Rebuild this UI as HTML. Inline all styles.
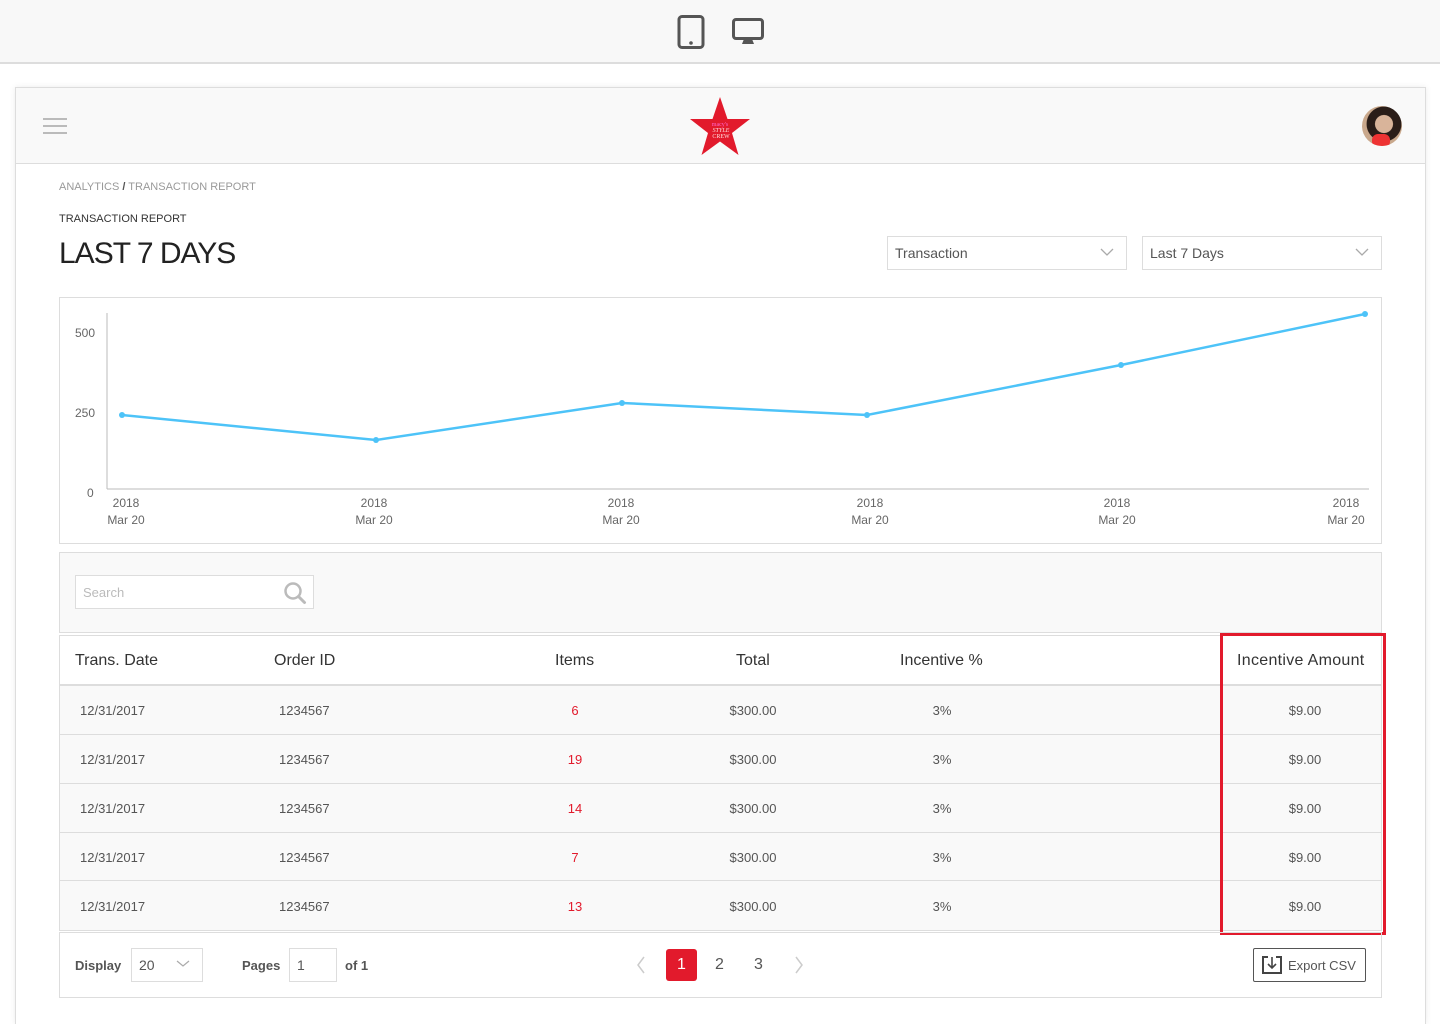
<!DOCTYPE html>
<html><head><meta charset="utf-8"><style>
*{box-sizing:border-box;margin:0;padding:0}
html{overflow:hidden;height:1024px}
body{width:1440px;height:1024px;overflow:hidden;background:#fff;font-family:"Liberation Sans",sans-serif;color:#333;position:relative}
.a{position:absolute}
.t{white-space:nowrap}
</style></head><body>
<div class="a" style="left:0;top:0;width:1440px;height:64px;background:#f8f8f8;border-bottom:2px solid #ddd"></div>
<svg class="a" style="left:677px;top:15px" width="28" height="34" viewBox="0 0 28 34"><rect x="2" y="1.5" width="24" height="31" rx="3" fill="none" stroke="#555" stroke-width="3"/><circle cx="14" cy="28" r="1.8" fill="#555"/></svg>
<svg class="a" style="left:732px;top:18px" width="32" height="28" viewBox="0 0 32 28"><rect x="1.5" y="1.5" width="29" height="19" rx="2.5" fill="none" stroke="#555" stroke-width="3"/><path d="M12 21h8l2 5h-12z" fill="#555"/></svg>

<div class="a" style="left:15px;top:87px;width:1411px;height:937px;border:1px solid #ddd;border-bottom:none;box-shadow:0 0 6px rgba(0,0,0,.08);background:#fff"></div>
<div class="a" style="left:16px;top:88px;width:1409px;height:76px;background:#f9f9f9;border-bottom:1px solid #ddd"></div>
<div class="a" style="left:43px;top:118px;width:24px;height:2px;background:#bbb"></div>
<div class="a" style="left:43px;top:125px;width:24px;height:2px;background:#bbb"></div>
<div class="a" style="left:43px;top:132px;width:24px;height:2px;background:#bbb"></div>
<svg class="a" style="left:689px;top:96px" width="62" height="60" viewBox="0 0 62 60"><polygon points="31,1 38.5,23 61,23 43,37 49.5,59 31,45.5 12.5,59 19,37 1,23 23.5,23" fill="#e21a2c"/><text x="31" y="30" font-size="6" fill="#f6c" text-anchor="middle" font-family="Liberation Serif">macy's</text><text x="32" y="36" font-size="6" fill="#fdd" text-anchor="middle" font-family="Liberation Serif" font-style="italic">STYLE</text><text x="32" y="42" font-size="6" fill="#fdd" text-anchor="middle" font-family="Liberation Serif">CREW</text></svg>
<div class="a" style="left:1362px;top:106px;width:40px;height:40px;border-radius:50%;background:radial-gradient(circle at 55% 45%,#d9b49a 0 28%,#2a1d18 30% 55%,#c9a88c 57%);overflow:hidden"><div class="a" style="left:10px;top:28px;width:18px;height:14px;background:#e33;border-radius:6px"></div></div>

<div class="a t" style="left:59px;top:181px;font-size:11px;color:#999">ANALYTICS <b style="color:#555">/</b> TRANSACTION REPORT</div>
<div class="a t" style="left:59px;top:213px;font-size:11px;color:#333">TRANSACTION REPORT</div>
<div class="a t" style="left:59px;top:237px;font-size:30px;color:#222;letter-spacing:-1px">LAST 7 DAYS</div>

<div class="a" style="left:887px;top:236px;width:240px;height:34px;border:1px solid #ddd"></div>
<div class="a t" style="left:895px;top:245px;font-size:14px;color:#555">Transaction</div>
<svg class="a" style="left:1100px;top:248px" width="14" height="9"><path d="M1 1l6 6 6-6" fill="none" stroke="#aaa" stroke-width="1.3"/></svg>
<div class="a" style="left:1142px;top:236px;width:240px;height:34px;border:1px solid #ddd"></div>
<div class="a t" style="left:1150px;top:245px;font-size:14px;color:#555">Last 7 Days</div>
<svg class="a" style="left:1355px;top:248px" width="14" height="9"><path d="M1 1l6 6 6-6" fill="none" stroke="#aaa" stroke-width="1.3"/></svg>

<div class="a" style="left:59px;top:297px;width:1323px;height:247px;border:1px solid #ddd"></div>
<svg class="a" style="left:59px;top:297px" width="1323" height="247" font-family="Liberation Sans" font-size="12" fill="#666">
<line x1="48" y1="16" x2="48" y2="192" stroke="#bbb"/><line x1="48" y1="192" x2="1310" y2="192" stroke="#bbb"/>
<text x="16" y="40">500</text><text x="16" y="120">250</text><text x="28" y="200">0</text>
<polyline points="63,118 317,143 563,106 808,118 1062,68 1306,17" fill="none" stroke="#4dc3f8" stroke-width="2.5"/>
<g fill="#4dc3f8"><circle cx="63" cy="118" r="3"/><circle cx="317" cy="143" r="3"/><circle cx="563" cy="106" r="3"/><circle cx="808" cy="118" r="3"/><circle cx="1062" cy="68" r="3"/><circle cx="1306" cy="17" r="3"/></g>
<g text-anchor="middle"><text x="67" y="210">2018</text><text x="67" y="227">Mar 20</text><text x="315" y="210">2018</text><text x="315" y="227">Mar 20</text><text x="562" y="210">2018</text><text x="562" y="227">Mar 20</text><text x="811" y="210">2018</text><text x="811" y="227">Mar 20</text><text x="1058" y="210">2018</text><text x="1058" y="227">Mar 20</text><text x="1287" y="210">2018</text><text x="1287" y="227">Mar 20</text></g>
</svg>

<div class="a" style="left:59px;top:552px;width:1323px;height:81px;border:1px solid #ddd;background:#f9f9f9"></div>
<div class="a" style="left:75px;top:575px;width:239px;height:34px;border:1px solid #ddd;background:#fff"></div>
<div class="a t" style="left:83px;top:585px;font-size:13px;color:#bbb">Search</div>
<svg class="a" style="left:283px;top:581px" width="24" height="24"><circle cx="10" cy="10" r="7.5" fill="none" stroke="#bbb" stroke-width="2.5"/><path d="M15.5 15.5l6 6" stroke="#bbb" stroke-width="3" stroke-linecap="round"/></svg>

<div class="a" style="left:59px;top:635px;width:1323px;height:296px;border:1px solid #ddd"></div>
<div class="a" style="left:60px;top:684px;width:1321px;height:2px;background:#ddd"></div>
<div style="font-size:16px;color:#333">
<div class="a t" style="left:75px;top:652px">Trans. Date</div>
<div class="a t" style="left:274px;top:652px">Order ID</div>
<div class="a t" style="left:555px;top:652px">Items</div>
<div class="a t" style="left:736px;top:652px">Total</div>
<div class="a t" style="left:900px;top:652px">Incentive %</div>
<div class="a t" style="left:1237px;top:652px;letter-spacing:0.3px">Incentive Amount</div>
</div>

<div class="a" style="left:60px;top:686px;width:1321px;height:244px;background:#f9f9f9"></div>
<div class="a" style="left:60px;top:734px;width:1321px;height:1px;background:#ddd"></div>
<div class="a" style="left:60px;top:783px;width:1321px;height:1px;background:#ddd"></div>
<div class="a" style="left:60px;top:832px;width:1321px;height:1px;background:#ddd"></div>
<div class="a" style="left:60px;top:880px;width:1321px;height:1px;background:#ddd"></div>

<div style="font-size:13px;color:#555">
<div class="a t" style="left:80px;top:703px">12/31/2017</div><div class="a t" style="left:279px;top:703px">1234567</div><div class="a" style="left:545px;width:60px;text-align:center;top:703px;color:#e21a2c">6</div><div class="a" style="left:713px;width:80px;text-align:center;top:703px">$300.00</div><div class="a" style="left:912px;width:60px;text-align:center;top:703px">3%</div><div class="a" style="left:1265px;width:80px;text-align:center;top:703px">$9.00</div>
<div class="a t" style="left:80px;top:752px">12/31/2017</div><div class="a t" style="left:279px;top:752px">1234567</div><div class="a" style="left:545px;width:60px;text-align:center;top:752px;color:#e21a2c">19</div><div class="a" style="left:713px;width:80px;text-align:center;top:752px">$300.00</div><div class="a" style="left:912px;width:60px;text-align:center;top:752px">3%</div><div class="a" style="left:1265px;width:80px;text-align:center;top:752px">$9.00</div>
<div class="a t" style="left:80px;top:801px">12/31/2017</div><div class="a t" style="left:279px;top:801px">1234567</div><div class="a" style="left:545px;width:60px;text-align:center;top:801px;color:#e21a2c">14</div><div class="a" style="left:713px;width:80px;text-align:center;top:801px">$300.00</div><div class="a" style="left:912px;width:60px;text-align:center;top:801px">3%</div><div class="a" style="left:1265px;width:80px;text-align:center;top:801px">$9.00</div>
<div class="a t" style="left:80px;top:850px">12/31/2017</div><div class="a t" style="left:279px;top:850px">1234567</div><div class="a" style="left:545px;width:60px;text-align:center;top:850px;color:#e21a2c">7</div><div class="a" style="left:713px;width:80px;text-align:center;top:850px">$300.00</div><div class="a" style="left:912px;width:60px;text-align:center;top:850px">3%</div><div class="a" style="left:1265px;width:80px;text-align:center;top:850px">$9.00</div>
<div class="a t" style="left:80px;top:899px">12/31/2017</div><div class="a t" style="left:279px;top:899px">1234567</div><div class="a" style="left:545px;width:60px;text-align:center;top:899px;color:#e21a2c">13</div><div class="a" style="left:713px;width:80px;text-align:center;top:899px">$300.00</div><div class="a" style="left:912px;width:60px;text-align:center;top:899px">3%</div><div class="a" style="left:1265px;width:80px;text-align:center;top:899px">$9.00</div>
</div>

<div class="a" style="left:1220px;top:633px;width:166px;height:302px;border:3px solid #e21a2c"></div>

<div class="a" style="left:59px;top:932px;width:1323px;height:66px;border:1px solid #ddd"></div>
<div class="a t" style="left:75px;top:958px;font-size:13px;font-weight:bold;color:#555">Display</div>
<div class="a" style="left:131px;top:948px;width:72px;height:34px;border:1px solid #ddd"></div>
<div class="a t" style="left:139px;top:957px;font-size:14px;color:#555">20</div>
<svg class="a" style="left:176px;top:960px" width="14" height="8"><path d="M1 1l6 5 6-5" fill="none" stroke="#aaa" stroke-width="1.2"/></svg>
<div class="a t" style="left:242px;top:958px;font-size:13px;font-weight:bold;color:#555">Pages</div>
<div class="a" style="left:289px;top:948px;width:48px;height:34px;border:1px solid #ddd"></div>
<div class="a t" style="left:297px;top:957px;font-size:14px;color:#555">1</div>
<div class="a t" style="left:345px;top:958px;font-size:13px;font-weight:bold;color:#555">of 1</div>

<svg class="a" style="left:636px;top:956px" width="10" height="18"><path d="M8 1l-6 8 6 8" fill="none" stroke="#ccc" stroke-width="1.5"/></svg>
<div class="a" style="left:666px;top:949px;width:31px;height:32px;background:#e21a2c;border-radius:3px;color:#fff;font-size:16px;text-align:center;line-height:32px">1</div>
<div class="a t" style="left:715px;top:956px;font-size:16px;color:#555">2</div>
<div class="a t" style="left:754px;top:956px;font-size:16px;color:#555">3</div>
<svg class="a" style="left:794px;top:956px" width="10" height="18"><path d="M2 1l6 8-6 8" fill="none" stroke="#ccc" stroke-width="1.5"/></svg>

<div class="a" style="left:1253px;top:948px;width:113px;height:34px;border:1px solid #555;border-radius:2px"></div>
<svg class="a" style="left:1261px;top:955px" width="22" height="20"><path d="M7 2H2v16h18V2h-5" fill="none" stroke="#444" stroke-width="2"/><path d="M11 2v11M7 9l4 4 4-4" fill="none" stroke="#444" stroke-width="1.6"/></svg>
<div class="a t" style="left:1288px;top:958px;font-size:13px;color:#555">Export CSV</div>
</body></html>
